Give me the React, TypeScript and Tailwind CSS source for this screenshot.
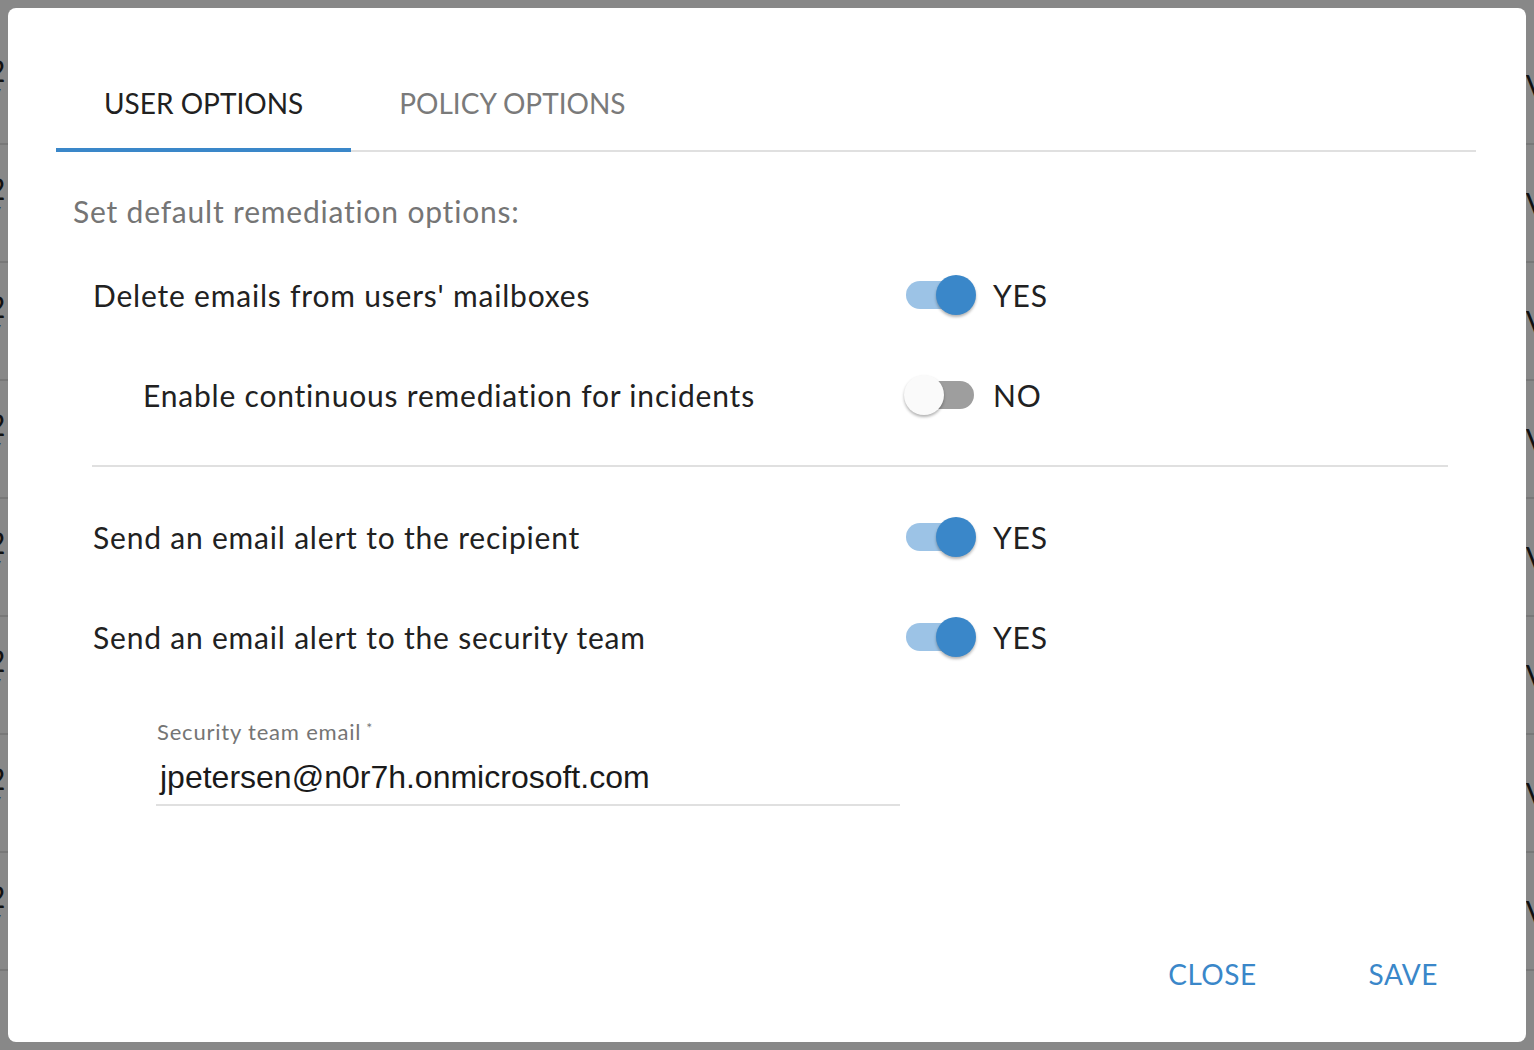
const rows = [
  { label: "Delete emails from users' mailboxes", on: true, indent: false },
  { label: 'Enable continuous remediation for incidents', on: false, indent: true },
];

const alerts = [
  { label: 'Send an email alert to the recipient', on: true },
  { label: 'Send an email alert to the security team', on: true },
];

function Toggle({ on }: { on: boolean }) {
  return (
    <div className="relative h-[40px] w-[72px] shrink-0">
      <div
        className={`absolute left-[2px] right-[2px] top-[6px] h-[28px] rounded-full ${
          on ? 'bg-[#9cc3e6]' : 'bg-[#9e9e9e]'
        }`}
      />
      <div
        className={`absolute top-0 h-[40px] w-[40px] rounded-full shadow-[0_2px_3px_rgba(0,0,0,0.3)] ${
          on ? 'right-0 bg-[#3a87c9]' : 'left-0 bg-[#fafafa]'
        }`}
      />
    </div>
  );
}

function OptionRow({ label, on, indent }: { label: string; on: boolean; indent?: boolean }) {
  return (
    <div className="flex h-[100px] items-center">
      <div className={`w-[811px] text-[30px] tracking-[0.8px] text-[#212121] ${indent ? 'pl-[50px]' : ''}`}>{label}</div>
      <Toggle on={on} />
      <div className="ml-[17px] text-[30px] tracking-[0.8px] text-[#212121]">{on ? 'YES' : 'NO'}</div>
    </div>
  );
}

export default function App() {
  return (
    <div className="relative h-[1050px] w-full overflow-hidden bg-[#888888] font-['Lato','Noto_Sans',sans-serif]">
      {/* page behind the dialog */}
      <div className="pt-[27px]">
        {Array.from({ length: 8 }).map((_, i) => (
          <div key={i} className="flex h-[118px] items-center justify-between border-b-2 border-[#787878] text-[30px] text-[#111]">
            <div className="ml-[-12px] leading-[30px]">
              2<br />/
            </div>
            <div className="mr-[-12px]">V</div>
          </div>
        ))}
      </div>

      <div className="absolute inset-0 p-2">
        <div className="flex h-[1034px] flex-col rounded-lg bg-white pl-12 pr-[50px] pt-12 pb-10">
          {/* Tabs */}
          <div className="flex border-b-2 border-[#e0e0e0]">
            <div className="relative flex h-[94px] items-center px-12 text-[28px] text-[#212121]">
              USER OPTIONS
              <div className="absolute bottom-[-2px] left-0 right-0 h-1 bg-[#3a87c9]" />
            </div>
            <div className="flex h-[94px] items-center px-12 text-[28px] text-[#7a7a7a]">POLICY OPTIONS</div>
          </div>

          <div className="ml-[17px] mt-[39px] text-[30px] leading-[40px] tracking-[0.8px] text-[#757575]">
            Set default remediation options:
          </div>

          <div className="ml-[37px] mt-[14px]">
            {rows.map((r) => (
              <OptionRow key={r.label} label={r.label} on={r.on} indent={r.indent} />
            ))}
          </div>

          <div className="ml-[36px] mr-[28px] mt-[20px] h-[2px] bg-[#e0e0e0]" />

          <div className="ml-[37px] mt-[20px]">
            {alerts.map((r) => (
              <OptionRow key={r.label} label={r.label} on={r.on} />
            ))}
          </div>

          {/* Security team email */}
          <div className="ml-[100px] mt-[31px] w-[744px]">
            <div className="pl-px text-[22px] leading-[28px] tracking-[0.8px] text-[#757575]">
              Security team email<sup className="ml-[5px] text-[14px]">*</sup>
            </div>
            <div className="mt-[11px] border-b-2 border-[#e0e0e0] pb-[7px]">
              <div className="h-[40px] pl-[4px] font-['Liberation_Sans',Arial,sans-serif] text-[32px] leading-[40px] text-[#1a1a1a]">
                jpetersen@n0r7h.onmicrosoft.com
              </div>
            </div>
          </div>

          {/* Actions */}
          <div className="mr-[22px] mt-auto flex justify-end gap-[80px]">
            <button className="h-[56px] px-4 text-[28px] tracking-[0.5px] text-[#3a87c9]">CLOSE</button>
            <button className="h-[56px] px-4 text-[28px] tracking-[0.5px] text-[#3a87c9]">SAVE</button>
          </div>
        </div>
      </div>
    </div>
  );
}
